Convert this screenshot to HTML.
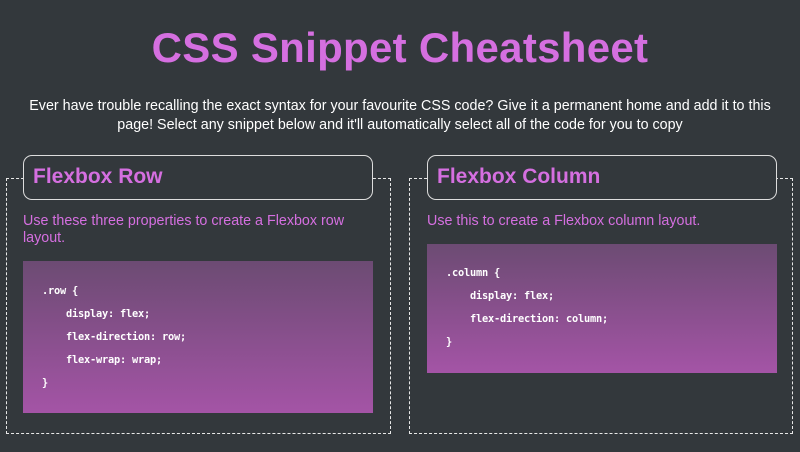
<!DOCTYPE html>
<html><head><style>
body{margin:0;width:800px;height:452px;background:#33383c;font-family:"Liberation Sans",sans-serif;position:relative;overflow:hidden}
h1{position:absolute;top:23px;left:0;width:800px;margin:0;text-align:center;font-size:42px;font-weight:bold;color:#d56fe0;line-height:50px;letter-spacing:0.3px}
.intro{position:absolute;top:97px;left:0;width:800px;text-align:center;color:#fff;font-size:14.3px;line-height:19px;margin:0}
.dash{position:absolute;border:1px dashed #e8e8e8;box-sizing:border-box}
.hd{position:absolute;border:1.5px solid #ddd;border-radius:9px;background:#33383c;box-sizing:border-box;color:#d56fe0;font-weight:bold;font-size:21px;line-height:42px;padding-left:9px}
.desc{position:absolute;color:#d56fe0;font-size:14.3px;line-height:17px}
.code{position:absolute;background:linear-gradient(#6c4b73,#a454a6);box-sizing:border-box;color:#fff;font-family:"DejaVu Sans Mono","Liberation Mono",monospace;font-weight:bold;font-size:10.3px;line-height:23px;white-space:pre;letter-spacing:-0.2px}
</style></head><body>
<h1>CSS Snippet Cheatsheet</h1>
<p class="intro">Ever have trouble recalling the exact syntax for your favourite CSS code? Give it a permanent home and add it to this<br>page! Select any snippet below and it'll automatically select all of the code for you to copy</p>

<div class="dash" style="left:6px;top:178px;width:385px;height:256px"></div>
<div class="hd" style="left:23px;top:155px;width:350px;height:45px">Flexbox Row</div>
<div class="desc" style="left:23px;top:213px;width:345px">Use these three properties to create a Flexbox row layout.</div>
<div class="code" style="left:23px;top:261px;width:350px;height:152px;padding:19px 0 0 19px">.row {
    display: flex;
    flex-direction: row;
    flex-wrap: wrap;
}</div>

<div class="dash" style="left:409px;top:178px;width:384px;height:256px"></div>
<div class="hd" style="left:427px;top:155px;width:350px;height:45px">Flexbox Column</div>
<div class="desc" style="left:427px;top:213px;width:350px">Use this to create a Flexbox column layout.</div>
<div class="code" style="left:427px;top:244px;width:350px;height:129px;padding:18px 0 0 19px">.column {
    display: flex;
    flex-direction: column;
}</div>
</body></html>
